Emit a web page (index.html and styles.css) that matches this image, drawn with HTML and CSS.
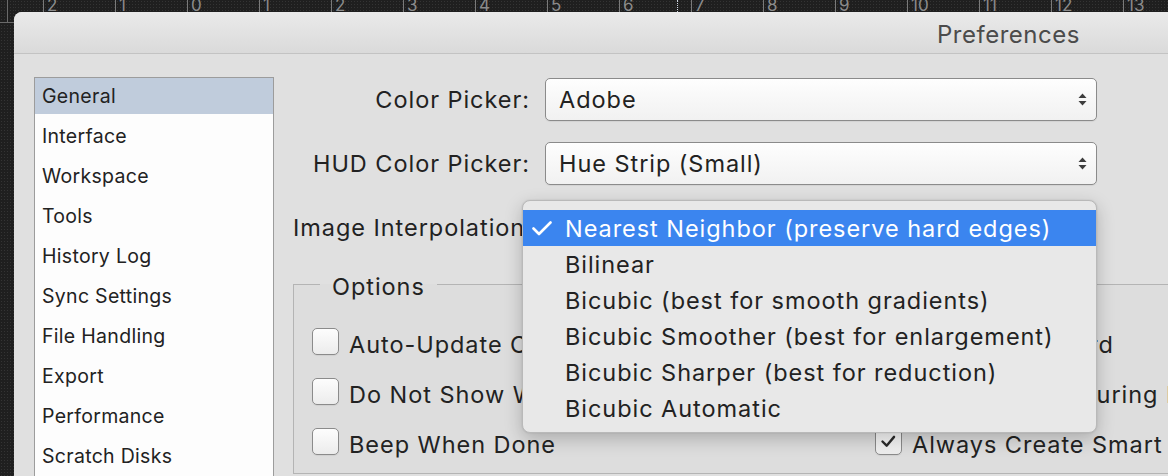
FILE: index.html
```html
<!DOCTYPE html>
<html lang="en">
<head>
<meta charset="utf-8">
<title>Preferences</title>
<link rel="stylesheet" href="styles.css">
</head>
<body>
<div class="screen">
  <div class="corner"><span class="corner-tick"></span></div>
  <div class="hruler">
    <span class="hr-lead"></span>
    <span class="hr-seg">2</span>
    <span class="hr-seg">1</span>
    <span class="hr-seg">0</span>
    <span class="hr-seg">1</span>
    <span class="hr-seg">2</span>
    <span class="hr-seg">3</span>
    <span class="hr-seg">4</span>
    <span class="hr-seg">5</span>
    <span class="hr-seg">6</span>
    <span class="hr-seg">7</span>
    <span class="hr-seg">8</span>
    <span class="hr-seg">9</span>
    <span class="hr-seg">10</span>
    <span class="hr-seg">11</span>
    <span class="hr-seg">12</span>
    <span class="hr-seg">13</span>
    <span class="hr-marker"></span>
  </div>
  <div class="vruler"><div class="vr-tick"><span></span></div></div>

  <div class="window">
    <div class="titlebar"><span class="title">Preferences</span></div>
    <div class="win-body">
      <ul class="nav">
        <li class="active">General</li>
        <li>Interface</li>
        <li>Workspace</li>
        <li>Tools</li>
        <li>History Log</li>
        <li>Sync Settings</li>
        <li>File Handling</li>
        <li>Export</li>
        <li>Performance</li>
        <li>Scratch Disks</li>
        <li>Transparency &amp; Gamut</li>
      </ul>

      <div class="pane">
        <div class="form">
          <label class="f-label">Color Picker:</label>
          <div class="select">
            <span class="select-value">Adobe</span>
            <svg class="arrows" viewBox="0 0 9 13"><polygon points="0.5,5 4.5,0.5 8.5,5"/><polygon points="0.5,8 4.5,12.5 8.5,8"/></svg>
          </div>

          <label class="f-label">HUD Color Picker:</label>
          <div class="select">
            <span class="select-value">Hue Strip (Small)</span>
            <svg class="arrows" viewBox="0 0 9 13"><polygon points="0.5,5 4.5,0.5 8.5,5"/><polygon points="0.5,8 4.5,12.5 8.5,8"/></svg>
          </div>

          <label class="f-label">Image Interpolation:</label>
          <div class="select">
            <span class="select-value">Nearest Neighbor (preserve hard edges)</span>
            <svg class="arrows" viewBox="0 0 9 13"><polygon points="0.5,5 4.5,0.5 8.5,5"/><polygon points="0.5,8 4.5,12.5 8.5,8"/></svg>
            <div class="menu">
              <div class="menu-item sel">
                <span class="check-slot"><svg class="menu-check" viewBox="0 0 20 15"><polyline points="1.5,7.5 7,13 18.5,1.5"/></svg></span>
                <span>Nearest Neighbor (preserve hard edges)</span>
              </div>
              <div class="menu-item"><span class="check-slot"></span><span>Bilinear</span></div>
              <div class="menu-item"><span class="check-slot"></span><span>Bicubic (best for smooth gradients)</span></div>
              <div class="menu-item"><span class="check-slot"></span><span>Bicubic Smoother (best for enlargement)</span></div>
              <div class="menu-item"><span class="check-slot"></span><span>Bicubic Sharper (best for reduction)</span></div>
              <div class="menu-item"><span class="check-slot"></span><span>Bicubic Automatic</span></div>
            </div>
          </div>
        </div>

        <fieldset class="group">
          <legend>Options</legend>
          <div class="opts">
            <div class="opt"><span class="cb"></span><span class="opt-text">Auto-Update Open Documents</span></div>
            <div class="opt"><span class="cb"></span><span class="opt-text">Export Clipboard</span></div>
            <div class="opt"><span class="cb"></span><span class="opt-text">Do Not Show Warnings Again</span></div>
            <div class="opt"><span class="cb"></span><span class="opt-text">Resize Image During Place</span></div>
            <div class="opt"><span class="cb"></span><span class="opt-text">Beep When Done</span></div>
            <div class="opt"><span class="cb checked"><svg viewBox="0 0 27 27"><polyline points="7,13.5 11.5,18 19.5,8.5"/></svg></span><span class="opt-text">Always Create Smart Objects when Placing</span></div>
          </div>
        </fieldset>
      </div>
    </div>
  </div>
</div>
</body>
</html>
```

FILE: styles.css
```css
html, body {
  margin: 0;
  padding: 0;
}

body {
  width: 1168px;
  height: 476px;
  overflow: hidden;
  background: #1f1f1f;
  font-family: Inter, "Noto Sans", sans-serif;
  color: #1f1f1f;
}

.screen {
  display: grid;
  grid-template-columns: 14px 1fr;
  grid-template-rows: 12px 464px;
  width: 1168px;
  height: 476px;
}

/* rulers */
.corner,
.hruler,
.vruler {
  background-color: #1f1f1f;
  background-image: radial-gradient(circle, #343434 0.7px, transparent 0.9px);
  background-size: 3px 3px;
}

.corner {
  display: flex;
}

.corner-tick {
  width: 7px;
  border-right: 1px solid #6a6a6a;
}

.hruler {
  position: relative;
  display: flex;
  height: 12px;
  overflow: hidden;
}

.hr-lead {
  flex: none;
  width: 29px;
}

.hr-seg {
  flex: none;
  width: 72px;
  box-sizing: border-box;
  border-left: 1px solid #7a7a7a;
  padding-left: 3px;
  font-size: 17px;
  line-height: 10px;
  color: #8b8b8b;
}

.hr-marker {
  position: absolute;
  left: 663px;
  top: 0;
  height: 12px;
  border-left: 1px dotted #cfd6e2;
}

.vr-tick {
  height: 10px;
  border-bottom: 1px solid #6a6a6a;
}

.vr-tick span {
  display: block;
  width: 7px;
  height: 100%;
  border-right: 1px solid #6a6a6a;
}

/* window */
.window {
  background: #e0e0e0;
  border-top-left-radius: 8px;
  overflow: hidden;
  display: flex;
  flex-direction: column;
}

.titlebar {
  flex: none;
  height: 42px;
  box-sizing: border-box;
  background: linear-gradient(#eaeaea, #dadada);
  border-bottom: 1px solid #c3c3c3;
  display: flex;
  align-items: center;
  padding: 3px 0 0 923px;
}

.title {
  font-size: 24px;
  letter-spacing: 0.5px;
  color: #4b4b4b;
  white-space: nowrap;
}

.win-body {
  flex: 1;
  display: flex;
  align-items: flex-start;
  padding: 23px 0 0 20px;
}

/* sidebar list */
.nav {
  flex: none;
  list-style: none;
  margin: 0;
  padding: 0;
  width: 240px;
  height: 440px;
  box-sizing: border-box;
  border: 1px solid #9c9c9c;
  background: #fdfdfd;
}

.nav li {
  height: 36px;
  line-height: 37px;
  margin-bottom: 4px;
  padding-left: 7px;
  font-size: 19.5px;
  letter-spacing: 0.3px;
  color: #222;
  white-space: nowrap;
}

.nav li.active {
  background: #c0ccdc;
}

/* right pane */
.pane {
  flex: none;
  width: 940px;
  margin-left: 19px;
  padding-top: 1px;
  letter-spacing: 0.95px;
}

.form {
  display: grid;
  grid-template-columns: 237px 552px;
  column-gap: 15px;
  row-gap: 21px;
  align-items: center;
}

.f-label {
  text-align: right;
  font-size: 23.5px;
  color: #222;
  white-space: nowrap;
}

.select {
  position: relative;
  height: 43px;
  box-sizing: border-box;
  border: 1px solid #8b8b8b;
  border-radius: 5px;
  background: linear-gradient(#fefefe, #f1f1f1);
  box-shadow: 0 1px 1px rgba(0, 0, 0, 0.06);
  display: flex;
  align-items: center;
  padding: 0 9px 0 13px;
  font-size: 23.5px;
  color: #222;
}

.select-value {
  flex: 1;
  white-space: nowrap;
}

.arrows {
  flex: none;
  width: 9px;
  height: 13px;
  fill: #3d3d3d;
}

/* popup menu */
.menu {
  position: absolute;
  left: -24px;
  top: -7px;
  z-index: 10;
  width: 575px;
  box-sizing: border-box;
  padding: 9px 0 6px;
  background: #e8e8e8;
  border: 1px solid #b9b9b9;
  border-radius: 8px;
  box-shadow: 0 6px 18px rgba(0, 0, 0, 0.22), 0 0 2px rgba(0, 0, 0, 0.12);
}

.menu-item {
  height: 36px;
  display: flex;
  align-items: center;
  font-size: 23.5px;
  color: #222;
  white-space: nowrap;
}

.menu-item.sel {
  background: #3b85ef;
  color: #fff;
}

.check-slot {
  flex: none;
  width: 42px;
  box-sizing: border-box;
  padding-left: 9px;
  display: flex;
  align-items: center;
}

.menu-check {
  width: 20px;
  height: 15px;
  fill: none;
  stroke: #fff;
  stroke-width: 2.6;
  stroke-linecap: round;
  stroke-linejoin: round;
}

/* options group */
.group {
  margin: 20px 0 0;
  padding: 29px 0 15px 18px;
  border: 1px solid #b4b4b4;
  min-width: 0;
  width: 940px;
  box-sizing: border-box;
  background: rgba(0, 0, 0, 0.012);
}

.group legend {
  margin-left: 8px;
  padding: 6px 12px 0;
  font-size: 23.5px;
  line-height: 24px;
  color: #222;
}

.opts {
  display: grid;
  grid-template-columns: 563px auto;
  row-gap: 20px;
}

.opt {
  display: flex;
  align-items: flex-start;
  gap: 10px;
  font-size: 23.5px;
  color: #222;
}

.opt-text {
  margin-top: 3px;
  line-height: 27px;
  white-space: nowrap;
}

.cb {
  flex: none;
  width: 27px;
  height: 27px;
  box-sizing: border-box;
  border: 1px solid #8b8b8b;
  border-radius: 5px;
  background: linear-gradient(#fdfdfd, #ececec);
  box-shadow: 0 1px 1px rgba(0, 0, 0, 0.06);
}

.cb svg {
  display: block;
  width: 25px;
  height: 25px;
  fill: none;
  stroke: #2b2b2b;
  stroke-width: 2.6;
  stroke-linecap: round;
  stroke-linejoin: round;
}
```
